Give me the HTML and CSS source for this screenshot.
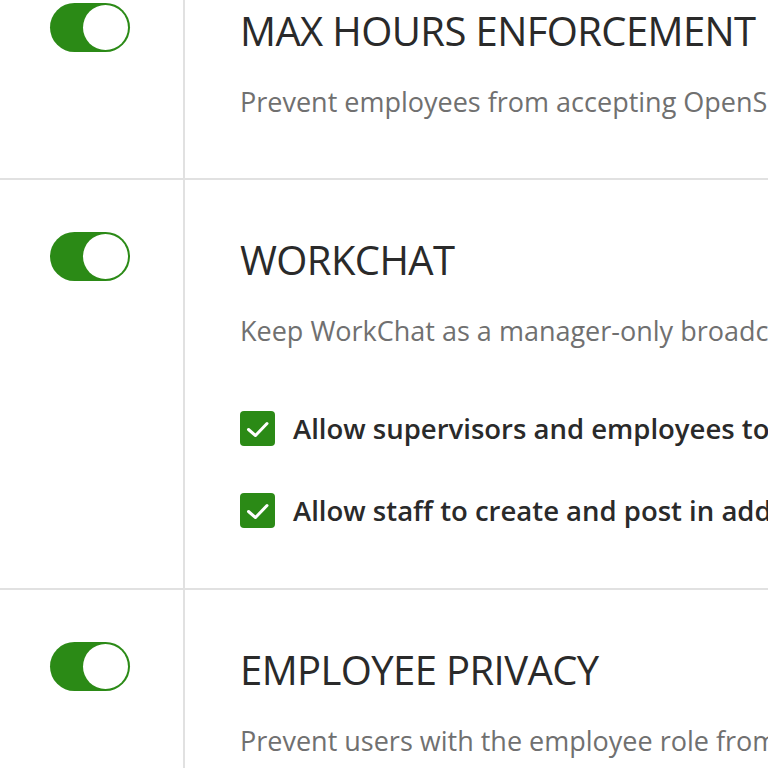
FILE: index.html
```html
<!DOCTYPE html>
<html lang="en">
<head>
<meta charset="utf-8">
<title>Settings</title>
<link rel="stylesheet" href="styles.css">
</head>
<body>
<div class="page">
  <section class="setting">
    <div class="toggle-col"><span class="toggle"><span class="knob"></span></span></div>
    <div class="content">
      <h2 class="title">MAX HOURS ENFORCEMENT</h2>
      <p class="desc">Prevent employees from accepting OpenShifts that would put them over their max hours</p>
    </div>
  </section>
  <section class="setting">
    <div class="toggle-col"><span class="toggle"><span class="knob"></span></span></div>
    <div class="content">
      <h2 class="title">WORKCHAT</h2>
      <p class="desc">Keep WorkChat as a manager-only broadcast tool</p>
      <ul class="options">
        <li class="option">
          <span class="check"><svg viewBox="0 0 35 35" width="35" height="35"><polyline points="8.5,18.5 15.5,24.5 27,12.5" fill="none" stroke="#fff" stroke-width="3" stroke-linecap="round" stroke-linejoin="round"/></svg></span>
          <span class="label">Allow supervisors and employees to start conversations</span>
        </li>
        <li class="option">
          <span class="check"><svg viewBox="0 0 35 35" width="35" height="35"><polyline points="8.5,18.5 15.5,24.5 27,12.5" fill="none" stroke="#fff" stroke-width="3" stroke-linecap="round" stroke-linejoin="round"/></svg></span>
          <span class="label">Allow staff to create and post in additional channels</span>
        </li>
      </ul>
    </div>
  </section>
  <section class="setting">
    <div class="toggle-col"><span class="toggle"><span class="knob"></span></span></div>
    <div class="content">
      <h2 class="title">EMPLOYEE PRIVACY</h2>
      <p class="desc">Prevent users with the employee role from seeing other users' contact info</p>
    </div>
  </section>
</div>
</body>
</html>
```
FILE: styles.css
```css
html, body {
  margin: 0;
  padding: 0;
  background: #fff;
  overflow: hidden;
}
body {
  font-family: "Open Sans", "Noto Sans", sans-serif;
  width: 768px;
  height: 768px;
}
.page {
  margin-top: -49px;
}
.setting {
  display: flex;
  border-bottom: 2px solid #e1e1e1;
}
.toggle-col {
  width: 133px;
  flex: none;
  padding: 52px 0 0 50px;
  border-right: 2px solid #e1e1e1;
}
.toggle {
  display: flex;
  justify-content: flex-end;
  align-items: center;
  width: 80px;
  height: 49px;
  box-sizing: border-box;
  padding: 2px;
  border-radius: 25px;
  background: #2b8a16;
}
.knob {
  width: 45px;
  height: 45px;
  border-radius: 50%;
  background: #fff;
}
.content {
  flex: 1;
  min-width: 0;
  padding: 55px 0 58px 55px;
  white-space: nowrap;
  overflow: hidden;
}
.title {
  margin: 0;
  font-size: 40px;
  letter-spacing: -0.6px;
  line-height: 50px;
  font-weight: 400;
  color: #2a2a2a;
}
.desc {
  margin: 28px 0 0;
  font-size: 27px;
  line-height: 36px;
  color: #707070;
}
.options {
  list-style: none;
  margin: 62px 0 2px;
  padding: 0;
  display: flex;
  flex-direction: column;
  gap: 47px;
}
.option {
  display: flex;
  align-items: center;
  gap: 18px;
  height: 35px;
}
.check {
  flex: none;
  width: 35px;
  height: 35px;
  border-radius: 4px;
  background: #2b8a16;
  display: block;
}
.check svg {
  display: block;
}
.label {
  font-size: 27.5px;
  font-weight: 600;
  color: #2a2a2a;
}
```
